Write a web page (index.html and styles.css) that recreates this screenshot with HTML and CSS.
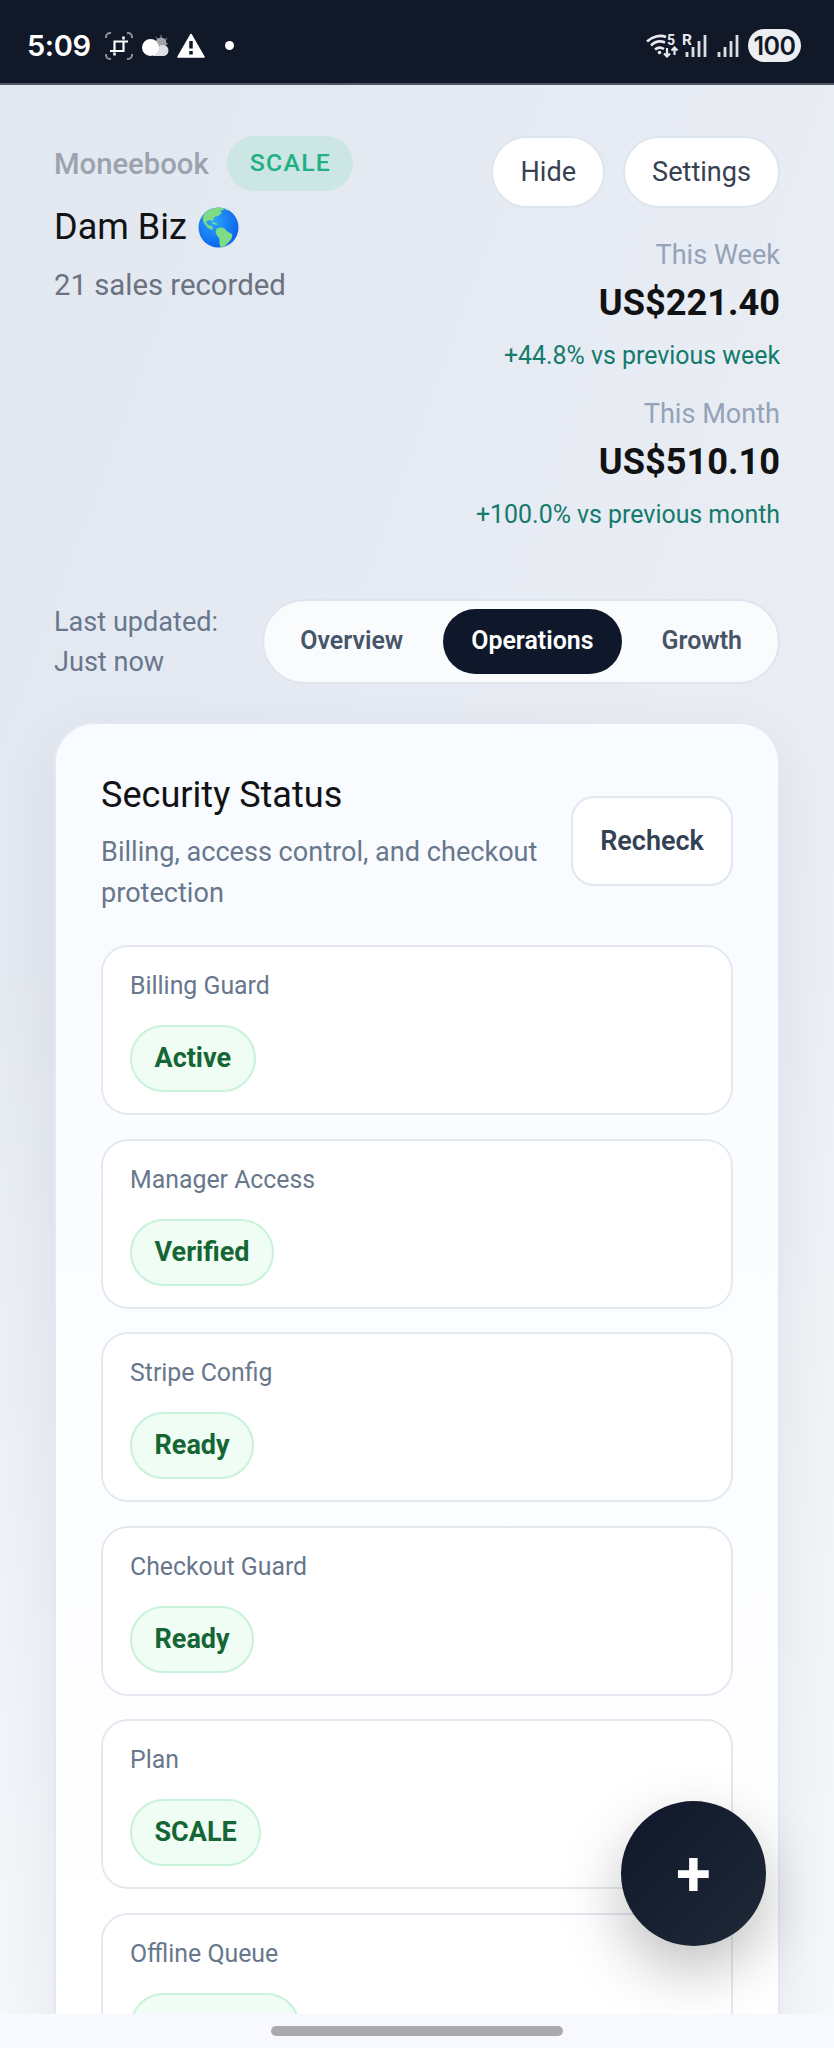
FILE: index.html
```
<!DOCTYPE html>
<html lang="en">
<head>
  <meta charset="UTF-8">
  <meta name="viewport" content="width=device-width, initial-scale=1">
  <title>Moneebook</title>
  <link rel="stylesheet" href="styles.css">
</head>
<body>

  <div class="statusbar">
    <span class="clock">5:09</span>
    <svg class="icon-crop" width="28" height="28" viewBox="0 0 28 28" fill="none">
      <path d="M1 6V5a4 4 0 0 1 4-4h1M22 1h1a4 4 0 0 1 4 4v1M27 22v1a4 4 0 0 1-4 4h-1M6 27H5a4 4 0 0 1-4-4v-1" stroke="#8d929c" stroke-width="2"/>
      <path d="M9.500 19.500V9.500H23M5 19h13.500V9.500" stroke="#fff" stroke-width="2.200"/>
      <path d="M18.500 4.500v3M9.500 20.500v3" stroke="#fff" stroke-width="2.500"/>
    </svg>
    <svg class="icon-cloud" width="27" height="22" viewBox="0 0 27 22">
      <path d="M19 0v4M14 2l2 3M25 3l-3 3M26 9h-4" stroke="#6b707b" stroke-width="1.300"/>
      <circle cx="19" cy="8" r="5.500" fill="#a3a5aa"/>
      <path d="M11 21h10a5.500 5.500 0 0 0 0-11c-4 0-5 3-10 4z" fill="#dddfe4"/>
      <path d="M8.500 4a8.500 8.500 0 1 1 0 17a8.500 8.500 0 0 1 0-17z" fill="#fff"/>
    </svg>
    <svg class="icon-warn" width="28" height="25" viewBox="0 0 28 25">
      <path d="M14 1.500L27 24H1z" fill="#fff" stroke="#fff" stroke-width="1.500" stroke-linejoin="round"/>
      <path d="M14 8v7.500M14 18v3.500" stroke="#111827" stroke-width="3.500"/>
    </svg>
    <span class="dot"></span>

    <div class="status-right">
      <svg class="wifi" width="33" height="26" viewBox="0 0 33 26" fill="none" stroke="#e8eaee" stroke-width="2.600">
        <path d="M1 8.500C6 3.500 14 1.500 20 4M5 12.500c4-4 9-5 14-3M9 16.500c3-2.500 6-2.500 9-.5"/>
        <circle cx="13.500" cy="19.500" r="1.800" fill="#e8eaee" stroke="none"/>
        <path d="M21 15v8M18 20.500l3 3 3-3M28.500 22v-7M25.500 17.500l3-3 3 3" stroke-width="2.200"/>
        <text x="21" y="12" class="icon-text" font-size="14">5</text>
      </svg>
      <svg class="signal" width="26" height="26" viewBox="0 0 26 26">
        <path d="M5 19v5M11 14v10M17 8v16M23 2v22" stroke="#dcdee3" stroke-width="2.800"/>
        <rect x="0" y="0" width="11" height="14" fill="#111827"/>
        <text x="0" y="12" class="icon-text" font-size="15.500">R</text>
      </svg>
      <svg class="signal2" width="22" height="26" viewBox="0 0 22 26">
        <path d="M2 19v5M8 14v10M14 8v16M20 2v22" stroke="#dcdee3" stroke-width="2.800"/>
      </svg>
      <span class="battery">100</span>
    </div>
  </div>

  <main class="page">
    <header class="header">
      <div class="brand">
        <div class="brand-row">
          <span class="brand-name">Moneebook</span>
          <span class="plan">SCALE</span>
        </div>
        <h1 class="biz">Dam Biz
          <svg class="globe" width="41" height="41" viewBox="0 0 41 41">
            <defs>
              <radialGradient id="sea" cx="38%" cy="35%" r="70%">
                <stop offset="0" stop-color="#2aa5f8"/>
                <stop offset="1" stop-color="#0a5ff0"/>
              </radialGradient>
            </defs>
            <circle cx="20.500" cy="20.500" r="20" fill="url(#sea)"/>
            <path d="M7 6C12 1 19 0 25 1l1 2-4 1 2 2-4 3-4 1-1 4-4-1-3 2 2 3 4 1 1 4-5-2-4-5C4 12 5 8 7 6z" fill="#7edc86"/>
            <path d="M28 2l3 2-4-1zM13 15l5 1 2 2-5-1z" fill="#7edc86"/>
            <path d="M18 23c2-3 6-3 9-1l3 3 4 2c1 4-2 7-4 9l-3 3-4 1.500c-3-4 0-8-3-11-2-2-3-4-2-6.500z" fill="#7edc86"/>
          </svg>
        </h1>
        <p class="sales">21 sales recorded</p>
      </div>

      <div class="summary">
        <div class="actions">
          <button class="pill-btn">Hide</button>
          <button class="pill-btn">Settings</button>
        </div>
        <div class="stat">
          <p class="stat-label">This Week</p>
          <p class="stat-value">US$221.40</p>
          <p class="stat-delta">+44.8% vs previous week</p>
        </div>
        <div class="stat">
          <p class="stat-label">This Month</p>
          <p class="stat-value">US$510.10</p>
          <p class="stat-delta">+100.0% vs previous month</p>
        </div>
      </div>
    </header>

    <div class="toolbar">
      <p class="updated">Last updated:<br>Just now</p>
      <nav class="tabs">
        <button class="tab">Overview</button>
        <button class="tab active">Operations</button>
        <button class="tab">Growth</button>
      </nav>
    </div>

    <section class="card">
      <div class="card-head">
        <div class="card-text">
          <h2>Security Status</h2>
          <p>Billing, access control, and checkout protection</p>
        </div>
        <button class="recheck">Recheck</button>
      </div>

      <div class="checks">
        <div class="check">
          <p class="check-label">Billing Guard</p>
          <span class="badge">Active</span>
        </div>
        <div class="check">
          <p class="check-label">Manager Access</p>
          <span class="badge">Verified</span>
        </div>
        <div class="check">
          <p class="check-label">Stripe Config</p>
          <span class="badge">Ready</span>
        </div>
        <div class="check">
          <p class="check-label">Checkout Guard</p>
          <span class="badge">Ready</span>
        </div>
        <div class="check">
          <p class="check-label">Plan</p>
          <span class="badge">SCALE</span>
        </div>
        <div class="check">
          <p class="check-label">Offline Queue</p>
          <span class="badge badge-queue"></span>
        </div>
      </div>
    </section>
  </main>

  <button class="fab">+</button>
  <div class="navbar"><span class="handle"></span></div>

</body>
</html>
```
FILE: styles.css
```
* {
  box-sizing: border-box;
}

body {
  margin: 0;
  height: 2048px;
  display: flex;
  flex-direction: column;
  overflow: hidden;
  position: relative;
  font-family: Roboto, "Liberation Sans", sans-serif;
  color: #111214;
}

h1, h2, p {
  margin: 0;
  font-weight: 400;
}

button {
  font-family: inherit;
  margin: 0;
}

/* status bar */
.statusbar {
  flex: none;
  height: 85px;
  display: flex;
  align-items: center;
  padding: 8px 33px 0 27px;
  background: #111827;
  border-bottom: 2px solid #505663;
}

.clock {
  width: 64px;
  font-family: Inter, Roboto, sans-serif;
  font-size: 29px;
  font-weight: 600;
  letter-spacing: -0.4px;
  color: #fff;
}

.icon-crop {
  margin-left: 14px;
}

.icon-cloud {
  margin-left: 9px;
}

.icon-warn {
  margin-left: 8px;
}

.dot {
  width: 9px;
  height: 9px;
  margin-left: 20px;
  border-radius: 50%;
  background: #fff;
}

.status-right {
  display: flex;
  align-items: center;
  margin-left: auto;
}

.icon-text {
  font-family: Roboto, sans-serif;
  font-weight: 700;
  fill: #e8eaee;
  stroke: none;
}

.wifi,
.signal {
  overflow: visible;
}

.signal {
  margin-left: 3px;
}

.signal2 {
  margin-left: 9px;
}

.battery {
  width: 53px;
  height: 33px;
  margin-left: 9px;
  border-radius: 17px;
  background: #eceef2;
  color: #111827;
  font-family: Inter, Roboto, sans-serif;
  font-size: 25px;
  font-weight: 600;
  line-height: 34px;
  letter-spacing: -0.5px;
  text-align: center;
}

/* page */
.page {
  flex: 1;
  min-height: 0;
  overflow: hidden;
  padding: 51px 54px 0 54px;
  background:
    linear-gradient(to bottom, rgba(246, 248, 251, 0) 0, rgba(246, 248, 251, 0) 45%, rgba(246, 248, 251, 0.9) 100%),
    linear-gradient(110deg, #e2e8f0 0%, #e7ebf3 45%, #eef0f4 100%);
}

.header {
  display: flex;
  justify-content: space-between;
  align-items: flex-start;
}

.brand-row {
  display: flex;
  align-items: center;
  gap: 18px;
  height: 55px;
}

.brand-name {
  font-size: 29.250px;
  font-weight: 500;
  color: #9ca3af;
}

.plan {
  height: 55px;
  padding: 0 22px 0 23px;
  border-radius: 28px;
  background: #cbe6e4;
  color: #1fb182;
  font-size: 24.750px;
  font-weight: 500;
  line-height: 54px;
  letter-spacing: 1.300px;
}

.biz {
  display: flex;
  align-items: center;
  gap: 11px;
  margin-top: 12px;
  font-size: 36px;
  line-height: 48px;
}

.sales {
  margin-top: 12px;
  font-size: 29.300px;
  line-height: 44px;
  color: #6b7280;
}

.summary {
  text-align: right;
}

.actions {
  display: flex;
  justify-content: flex-end;
  gap: 18px;
  margin-bottom: 27px;
}

.pill-btn {
  height: 72px;
  padding: 0 27px;
  border: 2px solid #dfe5ee;
  border-radius: 36px;
  background: #fff;
  color: #374151;
  font-size: 27.100px;
}

.stat + .stat {
  margin-top: 19px;
}

.stat-label {
  font-size: 27.100px;
  line-height: 40px;
  color: #94a3b8;
}

.stat-value {
  margin-top: 4px;
  font-size: 36.200px;
  font-weight: 700;
  line-height: 48px;
}

.stat-delta {
  margin-top: 10px;
  font-size: 24.900px;
  line-height: 38px;
  color: #147a6c;
}

.toolbar {
  display: flex;
  justify-content: space-between;
  align-items: center;
  margin-top: 65px;
}

.updated {
  padding-top: 1px;
  font-size: 27.100px;
  line-height: 40.500px;
  color: #68778c;
}

.tabs {
  display: flex;
  gap: 12px;
  height: 85px;
  padding: 8px;
  border: 2px solid #dfe5ee;
  border-radius: 43px;
  background: #f9fbfd;
}

.tab {
  height: 65px;
  padding: 0 28px 3px;
  border: 0;
  border-radius: 33px;
  background: none;
  color: #475569;
  font-size: 24.950px;
  font-weight: 600;
}

.tab.active {
  background: #0f172a;
  color: #fff;
}

/* security card */
.card {
  height: 1500px;
  margin-top: 38px;
  padding: 47px 45px;
  border: 2px solid #e2e9f5;
  border-radius: 40px;
  background: linear-gradient(to bottom, #f8fbff, #ffffff 1300px);
  box-shadow: 0 18px 60px rgba(15, 23, 42, 0.07);
}

.card-head {
  display: flex;
  justify-content: space-between;
  align-items: center;
}

.card-text {
  width: 450px;
}

.card-text h2 {
  font-size: 36.100px;
  line-height: 48px;
}

.card-text p {
  margin-top: 13px;
  font-size: 27.100px;
  line-height: 40.500px;
  color: #68778c;
}

.recheck {
  width: 162px;
  height: 90px;
  margin-top: -2px;
  padding: 0;
  border: 2px solid #e2e8f0;
  border-radius: 23px;
  background: #fff;
  color: #334155;
  font-size: 27px;
  font-weight: 600;
}

.checks {
  display: flex;
  flex-direction: column;
  gap: 23.500px;
  margin-top: 32px;
}

.check {
  height: 170px;
  padding: 20px 27px;
  border: 2px solid #e4e9f0;
  border-radius: 27px;
  background: #fff;
}

.check-label {
  font-size: 24.850px;
  line-height: 38px;
  color: #68778c;
}

.badge {
  display: inline-block;
  height: 67px;
  margin-top: 20px;
  padding: 0 22.500px;
  border: 2px solid #c9f2da;
  border-radius: 34px;
  background: #f0fdf4;
  color: #166534;
  font-size: 27px;
  font-weight: 700;
  line-height: 62px;
}

.badge-queue {
  width: 170px;
}

.fab {
  position: absolute;
  left: 621px;
  top: 1801px;
  width: 145px;
  height: 145px;
  padding: 0;
  border: 0;
  border-radius: 50%;
  background: linear-gradient(135deg, #0f172a, #1f2937);
  box-shadow: 0 24px 60px rgba(0, 0, 0, 0.25);
  color: #fff;
  font-size: 63px;
  font-weight: 700;
}

/* gesture area */
.navbar {
  position: relative;
  flex: none;
  display: flex;
  justify-content: center;
  height: 34px;
  padding-top: 12px;
  background: #f8f8ff;
}

.handle {
  width: 292px;
  height: 10px;
  border-radius: 5px;
  background: #a9a9ae;
}
```
